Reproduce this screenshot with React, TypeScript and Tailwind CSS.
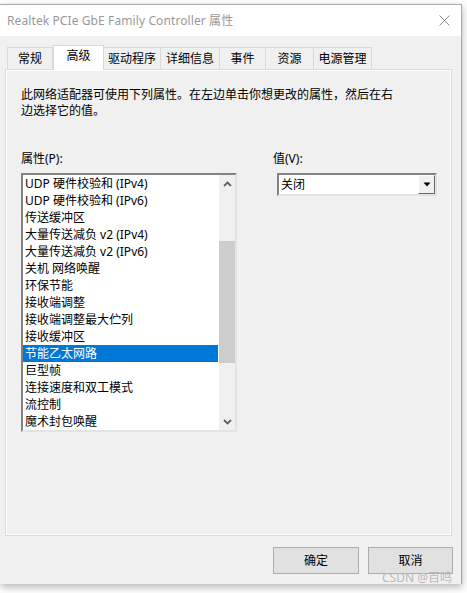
import React from 'react';

const font = { fontFamily: '"Noto Sans", "Noto Sans CJK SC", sans-serif' };

const tabs = [
  { label: '常规', w: 'w-[46px]' },
  { label: '高级', w: 'w-[51px]', active: true },
  { label: '驱动程序', w: 'w-[58px]' },
  { label: '详细信息', w: 'w-[60px]' },
  { label: '事件', w: 'w-[47px]' },
  { label: '资源', w: 'w-[49px]' },
  { label: '电源管理', w: 'w-[59px]' },
];

const items = [
  'UDP 硬件校验和 (IPv4)',
  'UDP 硬件校验和 (IPv6)',
  '传送缓冲区',
  '大量传送减负 v2 (IPv4)',
  '大量传送减负 v2 (IPv6)',
  '关机 网络唤醒',
  '环保节能',
  '接收端调整',
  '接收端调整最大伫列',
  '接收缓冲区',
  '节能乙太网路',
  '巨型帧',
  '连接速度和双工模式',
  '流控制',
  '魔术封包唤醒',
];

function Chevron({ up }: { up?: boolean }) {
  return (
    <svg width="9" height="6" viewBox="0 0 9 6" className="mx-auto">
      <path
        d={up ? 'M1 5 L4.5 1.5 L8 5' : 'M1 1 L4.5 4.5 L8 1'}
        fill="none"
        stroke="#606060"
        strokeWidth="1.8"
      />
    </svg>
  );
}

export default function App() {
  return (
    <div className="w-[467px] h-[593px] bg-white overflow-hidden text-[12px] text-black" style={font}>
      <div className="relative mt-[4px] w-[462px] h-[580px] border-t border-r border-[#a8a8a8] bg-[#f0f0f0] shadow-[0_3px_8px_rgba(0,0,0,0.3)] flex flex-col">
        {/* title bar */}
        <div className="h-[31px] bg-white flex items-center pl-[7px] pr-[10px]">
          <span className="text-[#999999] text-[12px] tracking-[0.1px]">Realtek PCIe GbE Family Controller 属性</span>
          <svg width="11" height="11" viewBox="0 0 11 11" className="ml-auto mr-[1px]">
            <path d="M0.5 0.5 L10.5 10.5 M10.5 0.5 L0.5 10.5" stroke="#8a8a8a" strokeWidth="1" />
          </svg>
        </div>

        {/* body */}
        <div className="flex-1 flex flex-col pl-[5px] pt-[9px]">
          <div className="flex items-end ml-[2px] h-[24px]">
            {tabs.map((t) =>
              t.active ? (
                <div
                  key={t.label}
                  className={`${t.w} h-[25px] -mb-px relative z-10 bg-white border-t border-l border-r border-[#d9d9d9] flex justify-center pt-[2px] leading-[16px]`}
                >
                  {t.label}
                </div>
              ) : (
                <div
                  key={t.label}
                  className={`${t.w} h-[22px] bg-[#f0f0f0] border-t border-l border-r border-[#d9d9d9] -ml-px first:ml-0 flex items-center justify-center leading-[16px]`}
                >
                  {t.label}
                </div>
              )
            )}
          </div>

          <div className="w-[447px] h-[467px] border border-[#d9d9d9] shadow-[inset_0_0_0_1px_#ffffff] pl-[15px] pt-[17px]">
            <p className="leading-[16px]">
              此网络适配器可使用下列属性。在左边单击你想更改的属性，然后在右
              <br />
              边选择它的值。
            </p>

            <div className="flex mt-[32px]">
              {/* left column */}
              <div className="w-[216px]">
                <div className="leading-[16px]">属性(P):</div>
                <div className="mt-[6px] h-[259px] border-2 border-t-[#828282] border-l-[#828282] border-r-[#e3e3e3] border-b-[#e3e3e3] bg-white flex">
                  <div className="flex-1 overflow-hidden">
                    {items.map((it) => (
                      <div
                        key={it}
                        className={`h-[17px] leading-[17px] pl-[2px] whitespace-nowrap ${
                          it === '节能乙太网路' ? 'bg-[#0078d7] text-white' : ''
                        }`}
                      >
                        {it}
                      </div>
                    ))}
                  </div>
                  <div className="w-[16px] ml-px bg-[#f0f0f0] flex flex-col">
                    <div className="h-[17px] flex items-center">
                      <Chevron up />
                    </div>
                    <div className="h-[49px]" />
                    <div className="h-[122px] bg-[#cdcdcd]" />
                    <div className="flex-1" />
                    <div className="h-[17px] flex items-center">
                      <Chevron />
                    </div>
                  </div>
                </div>
              </div>

              {/* right column */}
              <div className="ml-[36px]">
                <div className="leading-[16px]">值(V):</div>
                <div className="mt-[6px] ml-[4px] w-[160px] h-[23px] border-2 border-t-[#828282] border-l-[#828282] border-r-[#e3e3e3] border-b-[#e3e3e3] bg-white flex items-center">
                  <span className="pl-[2px] flex-1 leading-[16px]">关闭</span>
                  <div className="w-[17px] h-full bg-[#f0f0f0] border border-t-white border-l-white border-r-[#696969] border-b-[#696969] flex items-center justify-center">
                    <svg width="8" height="5" viewBox="0 0 8 5">
                      <path d="M0.5 0.5 L7.5 0.5 L4 4.5 Z" fill="#000" />
                    </svg>
                  </div>
                </div>
              </div>
            </div>
          </div>

          <div className="flex justify-end gap-[9px] mt-[11px] mr-[8px]">
            <button className="w-[86px] h-[27px] border border-[#adadad] bg-[#e1e1e1] leading-[16px]">确定</button>
            <button className="w-[85px] h-[27px] border border-[#adadad] bg-[#e1e1e1] leading-[16px]">取消</button>
          </div>
        </div>

        <div className="absolute right-[9px] bottom-[-1px] text-[12px] leading-[14px] text-[#b8b8b8]">CSDN @百鸣</div>
      </div>
    </div>
  );
}
